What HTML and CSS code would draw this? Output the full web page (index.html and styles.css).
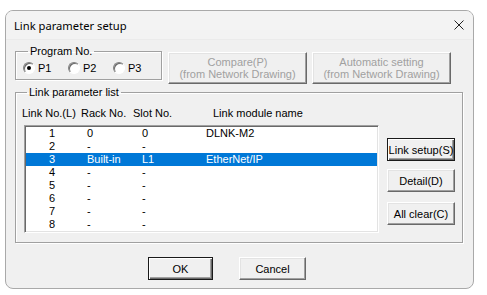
FILE: index.html
```html
<!DOCTYPE html>
<html lang="en">
<head>
  <meta charset="UTF-8">
  <title>Link parameter setup</title>
  <link rel="stylesheet" href="styles.css">
</head>
<body>
  <div class="window">
    <div class="titlebar">
      <span class="title">Link parameter setup</span>
      <svg class="close" viewBox="0 0 10 10" width="10" height="10">
        <path d="M0.5,0.5 L9.5,9.5 M9.5,0.5 L0.5,9.5" stroke="#222" stroke-width="1" fill="none"/>
      </svg>
    </div>

    <div class="content">
      <div class="top-row">
        <fieldset class="group program">
          <legend>Program No.</legend>
          <div class="radios">
            <label class="radio"><span class="dot checked"></span>P1</label>
            <label class="radio"><span class="dot"></span>P2</label>
            <label class="radio"><span class="dot"></span>P3</label>
          </div>
        </fieldset>
        <button class="btn wide" disabled>Compare(P)<br>(from Network Drawing)</button>
        <button class="btn wide" disabled>Automatic setting<br>(from Network Drawing)</button>
      </div>

      <fieldset class="group params">
        <legend>Link parameter list</legend>
        <div class="headers">
          <span>Link No.(L)</span>
          <span>Rack No.</span>
          <span>Slot No.</span>
          <span>Link module name</span>
        </div>
        <div class="list-area">
          <div class="listbox">
            <div class="row"><span>1</span><span>0</span><span>0</span><span>DLNK-M2</span></div>
            <div class="row"><span>2</span><span>-</span><span>-</span><span></span></div>
            <div class="row selected"><span>3</span><span>Built-in</span><span>L1</span><span>EtherNet/IP</span></div>
            <div class="row"><span>4</span><span>-</span><span>-</span><span></span></div>
            <div class="row"><span>5</span><span>-</span><span>-</span><span></span></div>
            <div class="row"><span>6</span><span>-</span><span>-</span><span></span></div>
            <div class="row"><span>7</span><span>-</span><span>-</span><span></span></div>
            <div class="row"><span>8</span><span>-</span><span>-</span><span></span></div>
          </div>
          <div class="side-buttons">
            <button class="btn side focus">Link setup(S)</button>
            <button class="btn side">Detail(D)</button>
            <button class="btn side clear">All clear(C)</button>
          </div>
        </div>
      </fieldset>

      <div class="bottom-row">
        <button class="btn action default">OK</button>
        <button class="btn action">Cancel</button>
      </div>
    </div>
  </div>
</body>
</html>
```

FILE: styles.css
```css
body {
  margin: 0;
  background: #ffffff;
  padding: 10px 0 0 5px;
}
.window {
  width: 467px;
  height: 277px;
  border: 1px solid #a9a9a9;
  border-radius: 8px;
  background: #f0f0f0;
  overflow: hidden;
  font-family: "Liberation Sans", Arial, sans-serif;
  font-size: 11px;
  color: #000;
}
.titlebar {
  height: 28px;
  display: flex;
  align-items: center;
  justify-content: space-between;
  padding: 0 9px 0 8px;
  background: #f3f3f3;
  border-bottom: 1px solid #ebebeb;
}
.title {
  font-family: "Noto Sans", sans-serif;
  font-size: 11.2px;
}
.content {
  padding: 5px 0 0 9px;
}
.top-row {
  display: flex;
  align-items: flex-start;
}
.group {
  margin: 0;
  padding: 0;
  border: 1px solid #a0a0a0;
  box-shadow: inset 1px 1px #fff, 1px 1px #fff;
}
.group legend {
  padding: 0 2px;
  margin-left: 5px;
  line-height: 13px;
}
.program {
  width: 147px;
  padding: 4px 0 5px 7px;
  box-sizing: border-box;
  height: 35px;
}
.radios {
  display: flex;
}
.radio {
  width: 45px;
  display: flex;
  align-items: center;
  height: 12px;
  gap: 3px;
}
.dot {
  width: 10px;
  height: 10px;
  border: 1px solid;
  border-color: #808080 #fff #fff #808080;
  border-radius: 50%;
  background: #fff;
  box-shadow: inset 1px 1px #696969;
  position: relative;
  flex: none;
}
.dot.checked::after {
  content: "";
  position: absolute;
  left: 3px;
  top: 3px;
  width: 4px;
  height: 4px;
  border-radius: 50%;
  background: #000;
}
.btn {
  font-family: "Liberation Sans", Arial, sans-serif;
  font-size: 11px;
  line-height: 12px;
  color: #000;
  background: #f0f0f0;
  padding: 0;
  margin: 0;
  border: 1px solid;
  border-color: #fff #696969 #696969 #fff;
  box-shadow: inset -1px -1px #a0a0a0, inset 1px 1px #e3e3e3;
  border-radius: 0;
}
.btn:disabled {
  color: #a0a0a0;
}
.wide {
  width: 139px;
  height: 32px;
  margin-top: 7px;
  margin-left: 6px;
}
.wide + .wide {
  margin-left: 5px;
}
.params {
  width: 448px;
  height: 157px;
  box-sizing: border-box;
  margin-top: 2px;
  padding: 8px 0 0 6px;
}
.headers {
  display: grid;
  grid-template-columns: 59px 52px 80px 1fr;
  height: 13px;
  line-height: 13px;
}
.list-area {
  display: flex;
  align-items: flex-start;
  margin-top: 5px;
  margin-left: 2px;
}
.listbox {
  width: 351px;
  height: 104px;
  background: #fff;
  border: 1px solid;
  border-color: #a0a0a0 #fff #fff #a0a0a0;
  box-shadow: inset 1px 1px #696969, inset -1px -1px #e3e3e3;
  padding: 1px;
}
.row {
  display: grid;
  grid-template-columns: 61px 55px 64px 1fr;
  height: 13px;
  line-height: 13px;
}
.row span:first-child {
  text-align: center;
  padding-right: 9px;
}
.row.selected {
  background: #0078d7;
  color: #fff;
}
.side-buttons {
  display: flex;
  flex-direction: column;
  margin-left: 8px;
  margin-top: 13px;
}
.side {
  width: 68px;
  height: 23px;
}
.side + .side {
  margin-top: 8px;
}
.side.clear {
  margin-top: 10px;
}
.focus, .default {
  border-color: #1a1a1a;
  box-shadow: inset 1px 1px #fff, inset -1px -1px #696969, inset -2px -2px #a0a0a0;
}
.bottom-row {
  display: flex;
  padding-left: 133px;
  margin-top: 14px;
}
.action {
  height: 23px;
}
.action.default {
  width: 65px;
}
.action + .action {
  width: 67px;
  margin-left: 26px;
}
```
